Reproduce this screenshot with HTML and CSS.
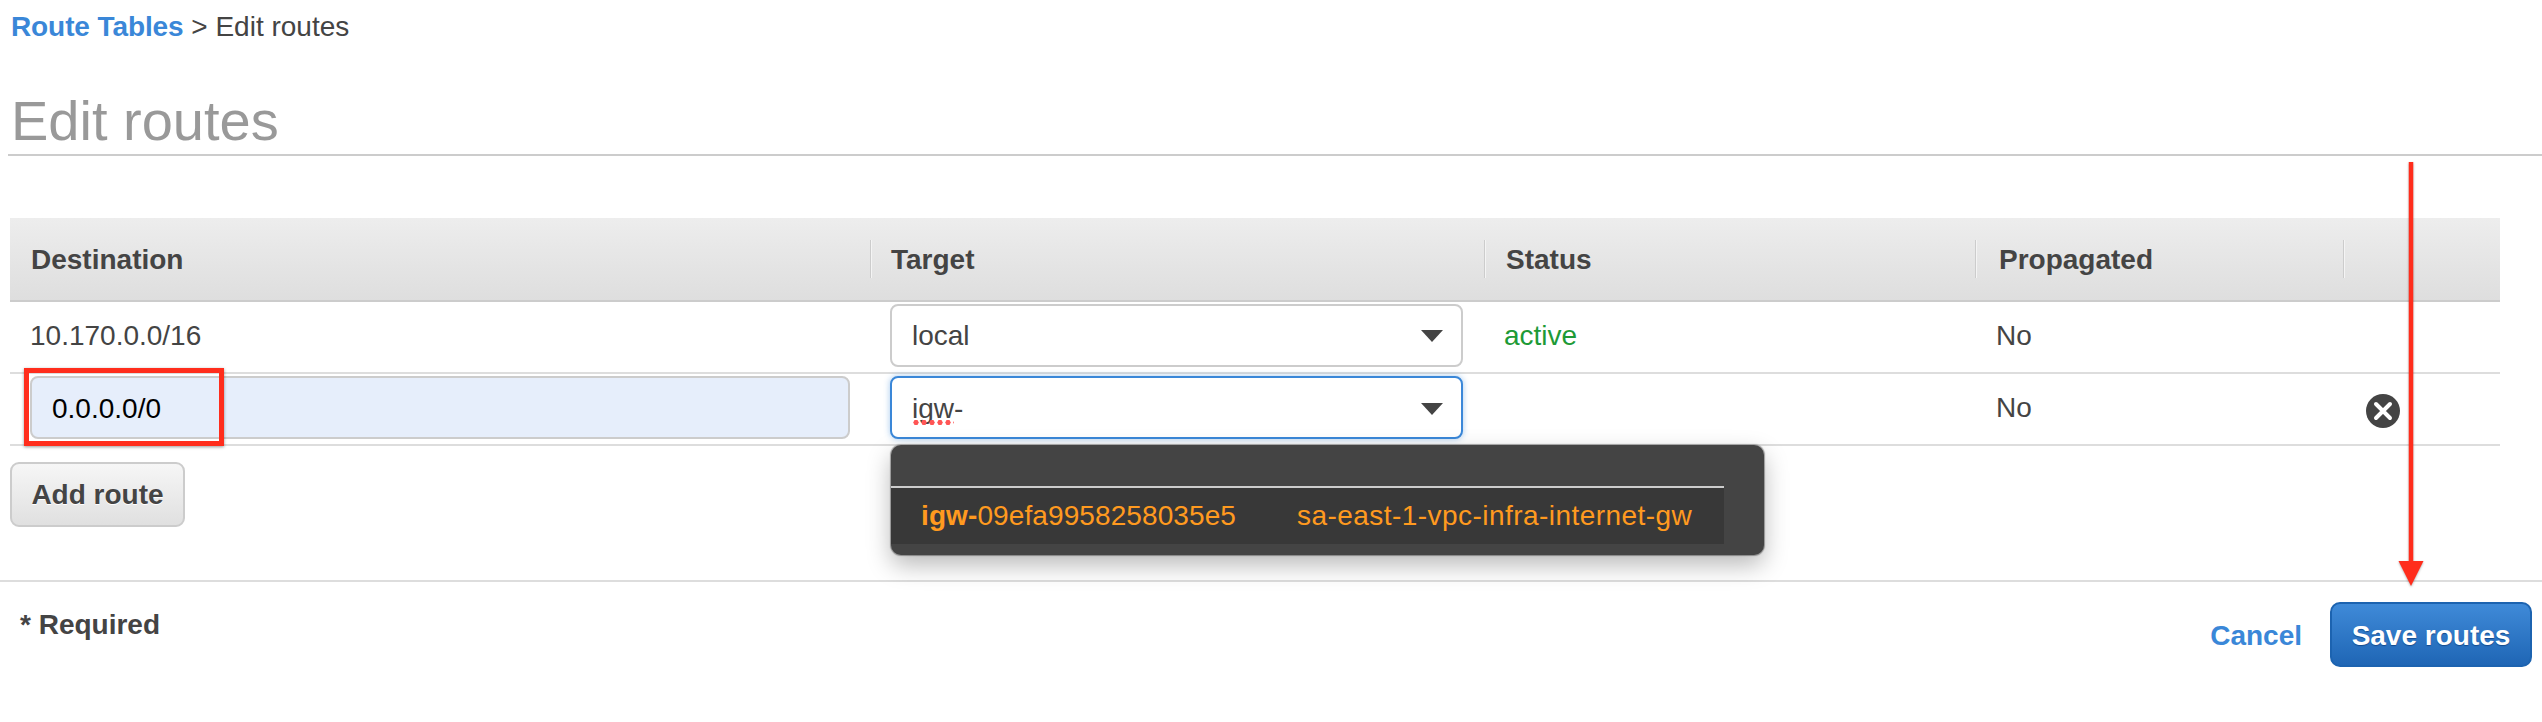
FILE: index.html
```html
<!DOCTYPE html>
<html lang="en">
<head>
  <title>Edit routes</title>
  <link rel="stylesheet" href="styles.css">
</head>
<body>
  <div class="crumbs"><a href="#">Route Tables</a> &gt; Edit routes</div>
  <h1>Edit routes</h1>

  <table class="routes">
    <colgroup>
      <col class="col-dest">
      <col class="col-target">
      <col class="col-status">
      <col class="col-prop">
      <col class="col-del">
    </colgroup>
    <thead>
      <tr>
        <th>Destination</th>
        <th>Target</th>
        <th class="th-status">Status</th>
        <th class="th-prop">Propagated</th>
        <th></th>
      </tr>
    </thead>
    <tbody>
      <tr>
        <td>10.170.0.0/16</td>
        <td>
          <div class="select"><span>local</span><i class="caret"></i></div>
        </td>
        <td class="active">active</td>
        <td class="prop">No</td>
        <td></td>
      </tr>
      <tr>
        <td class="dest-cell">
          <input class="dest-input" type="text" value="0.0.0.0/0">
          <div class="red-box"></div>
        </td>
        <td class="target-cell">
          <div class="select focused"><span class="typo">igw</span><span>-</span><i class="caret"></i></div>
          <!-- Autocomplete -->
          <div class="dropdown">
            <div class="dropdown-head"></div>
            <div class="dropdown-row">
              <span class="gw-id"><b>igw-</b>09efa9958258035e5</span>
              <span class="gw-name">sa-east-1-vpc-infra-internet-gw</span>
            </div>
          </div>
        </td>
        <td></td>
        <td class="prop">No</td>
        <td>
          <svg class="del" viewBox="0 0 34 34" width="34" height="34">
            <circle cx="17" cy="17" r="17" fill="#444"/>
            <path d="M10 10 L24 24 M24 10 L10 24" stroke="#fff" stroke-width="4" stroke-linecap="round" fill="none"/>
          </svg>
        </td>
      </tr>
    </tbody>
  </table>

  <button class="btn add-btn" type="button">Add route</button>

  <footer>
    <div class="required">* Required</div>
    <div class="actions">
      <a href="#">Cancel</a>
      <button class="btn save-btn" type="button">Save routes</button>
    </div>
  </footer>

  <!-- Annotation arrow -->
  <svg class="arrow" viewBox="0 0 30 430" width="30" height="430">
    <path d="M15 2 V404" stroke="#ff2d1c" stroke-width="4.5" fill="none"/>
    <polygon points="2.5,401 27.5,401 15,426" fill="#ff2d1c"/>
  </svg>
</body>
</html>
```

FILE: styles.css
```css
body {
  margin: 0;
  height: 722px;
  overflow: hidden;
  background-color: #fff;
  color: #444;
  font-family: "Liberation Sans", Arial, sans-serif;
  font-size: 28px;
}

.crumbs {
  padding: 10px 11px 0;
  line-height: 34px;
}

.crumbs a {
  color: #3a87d8;
  font-weight: bold;
  letter-spacing: -0.1px;
  text-decoration: none;
}

h1 {
  margin: 44px 0 62px 8px;
  padding-left: 3px;
  border-bottom: 2px solid #ccc;
  color: #999;
  font-size: 56px;
  font-weight: normal;
  line-height: 66px;
}

.routes {
  width: 2490px;
  margin-left: 10px;
  border-collapse: collapse;
  table-layout: fixed;
}

.col-dest { width: 860px; }
.col-target { width: 614px; }
.col-status { width: 491px; }
.col-prop { width: 368px; }
.col-del { width: 157px; }

th {
  height: 80px;
  padding: 2px 0 0 21px;
  border-bottom: 2px solid #ccc;
  background-color: #e5e5e5;
  background-image: linear-gradient(90deg, #ccc 50%, #f4f4f4 50%), linear-gradient(#ededed, #dedede);
  background-position: 0 22px, 0 0;
  background-repeat: no-repeat;
  background-size: 2px 38px, 100% 100%;
  font-weight: bold;
  text-align: left;
}

th:first-child {
  background-image: linear-gradient(#ededed, #dedede);
  background-position: 0 0;
  background-size: 100% 100%;
}

.th-status {
  padding-left: 22px;
}

.th-prop {
  padding-left: 24px;
}

td {
  height: 63px;
  padding: 2px 20px 5px;
  border-bottom: 2px solid #ddd;
}

td.prop {
  padding-left: 21px;
}

.active {
  color: #1d9a36;
}

.dest-cell,
.target-cell {
  position: relative;
}

.dest-input {
  display: block;
  box-sizing: border-box;
  width: 820px;
  height: 63px;
  padding: 2px 20px 0;
  border: 2px solid #ccc;
  border-radius: 8px;
  outline: none;
  background-color: #e6eefb;
  color: #000;
  font-family: inherit;
  font-size: 28px;
}

.select {
  display: flex;
  align-items: center;
  box-sizing: border-box;
  width: 573px;
  height: 63px;
  padding: 0 18px 0 20px;
  border: 2px solid #ccc;
  border-radius: 8px;
  background-color: #fff;
}

.select.focused {
  padding-top: 2px;
  border-color: #3a87d8;
  box-shadow: 0 0 6px rgba(58, 135, 216, 0.45);
}

.caret {
  width: 0;
  height: 0;
  margin-left: auto;
  border-top: 12px solid #444;
  border-right: 11.5px solid transparent;
  border-left: 11.5px solid transparent;
}

.typo {
  position: relative;
}

/* spell check dots */
.typo::after {
  content: "";
  position: absolute;
  left: 0;
  right: 0;
  bottom: 0;
  height: 5px;
  background-image: radial-gradient(circle at center, #f55 2.4px, transparent 2.8px);
  background-size: 8px 5px;
}

.dropdown {
  position: absolute;
  top: 71px;
  left: 21px;
  z-index: 2;
  width: 873px;
  height: 110px;
  border-radius: 10px;
  background-color: #444;
  box-shadow: 0 10px 24px rgba(0, 0, 0, 0.28), 0 0 1px 1px #aaa;
}

.dropdown-head {
  width: 833px;
  height: 41px;
  border-bottom: 2px solid #ccc;
}

.dropdown-row {
  display: flex;
  align-items: center;
  box-sizing: border-box;
  width: 833px;
  height: 56px;
  padding-left: 30px;
  background-color: #383838;
  color: #ff9a1f;
}

.gw-id {
  width: 376px;
  letter-spacing: 0.1px;
}

.gw-name {
  letter-spacing: 0.45px;
}

.del {
  display: block;
  margin: 7px 0 0 3px;
}

.red-box {
  position: absolute;
  top: -6px;
  left: 14px;
  box-sizing: border-box;
  width: 200px;
  height: 78px;
  border: 5px solid #ff2d1c;
  box-shadow: 0 1px 3px rgba(0, 0, 0, 0.4);
}

.btn {
  box-sizing: border-box;
  height: 65px;
  font-family: inherit;
  font-size: 28px;
  font-weight: bold;
  cursor: pointer;
}

.add-btn {
  display: block;
  width: 175px;
  margin: 16px 0 53px 10px;
  padding: 0;
  border: 2px solid #ccc;
  border-radius: 9px;
  background-image: linear-gradient(#f6f6f6, #e0e0e0);
  color: #444;
  text-shadow: 0 1px 0 #fff;
}

footer {
  display: flex;
  justify-content: space-between;
  align-items: flex-start;
  padding: 20px 10px 0 20px;
  border-top: 2px solid #ddd;
}

.required {
  margin-top: 6px;
  font-weight: bold;
  line-height: 34px;
}

.actions {
  display: flex;
  align-items: center;
  gap: 28px;
}

.actions a {
  margin-top: 2px;
  color: #3a87d8;
  font-weight: bold;
  text-decoration: none;
}

.save-btn {
  width: 202px;
  padding: 2px 0 0;
  border: 2px solid #1c63b0;
  border-radius: 10px;
  background-image: linear-gradient(#3f8ad8, #1f66b5);
  color: #fff;
  text-shadow: 0 1px 1px #144a8c;
}

.arrow {
  position: absolute;
  top: 160px;
  left: 2395.5px;
  z-index: 3;
  filter: drop-shadow(0 1px 1px rgba(0, 0, 0, 0.3));
}
```
